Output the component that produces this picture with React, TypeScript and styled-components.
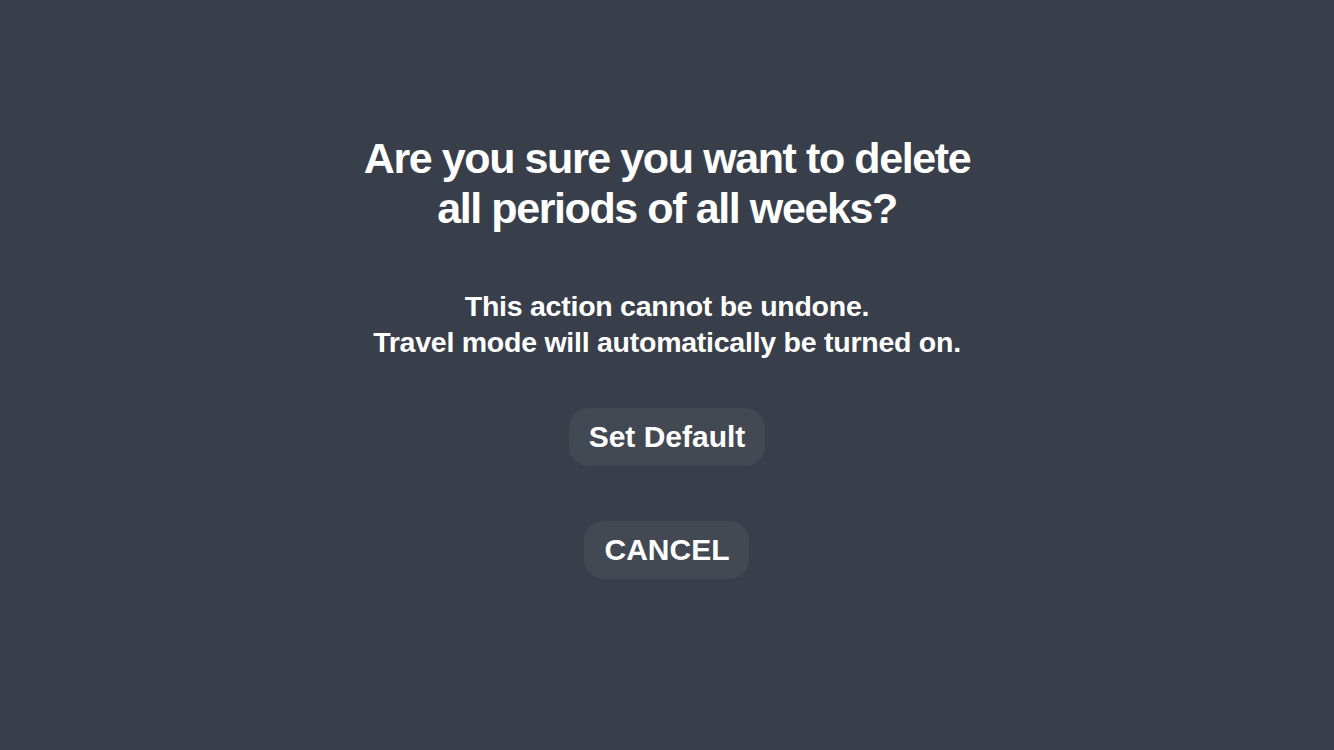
import React from 'react';
import styled, { createGlobalStyle } from 'styled-components';

const GlobalStyle = createGlobalStyle`
  html, body {
    margin: 0;
    padding: 0;
    background: #393f4a;
  }
  body {
    font-family: "Liberation Sans", Arial, Helvetica, sans-serif;
  }
`;

const Screen = styled.div`
  width: 1334px;
  height: 750px;
  background: #393f4a;
  display: flex;
  flex-direction: column;
  align-items: center;
  padding-top: 133px;
  box-sizing: border-box;
  color: #ffffff;
`;

const Title = styled.h1`
  margin: 0;
  font-size: 43px;
  line-height: 50px;
  font-weight: 700;
  letter-spacing: -1.4px;
  text-align: center;
`;

const Message = styled.p`
  margin: 55px 0 0;
  font-size: 28.5px;
  line-height: 36px;
  font-weight: 700;
  letter-spacing: -0.25px;
  text-align: center;
`;

const Actions = styled.div`
  display: flex;
  flex-direction: column;
  align-items: center;
  gap: 55px;
  margin-top: 48px;
`;

const Button = styled.button`
  height: 58px;
  padding: 0 20px;
  border: none;
  border-radius: 20px;
  background: #434953;
  color: #ffffff;
  font-family: inherit;
  font-size: 30px;
  font-weight: 700;
  cursor: pointer;
`;

const App: React.FC = () => {
  return (
    <>
      <GlobalStyle />
      <Screen>
        <Title>
          Are you sure you want to delete
          <br />
          all periods of all weeks?
        </Title>
        <Message>
          This action cannot be undone.
          <br />
          Travel mode will automatically be turned on.
        </Message>
        <Actions>
          <Button>Set Default</Button>
          <Button>CANCEL</Button>
        </Actions>
      </Screen>
    </>
  );
};

export default App;
